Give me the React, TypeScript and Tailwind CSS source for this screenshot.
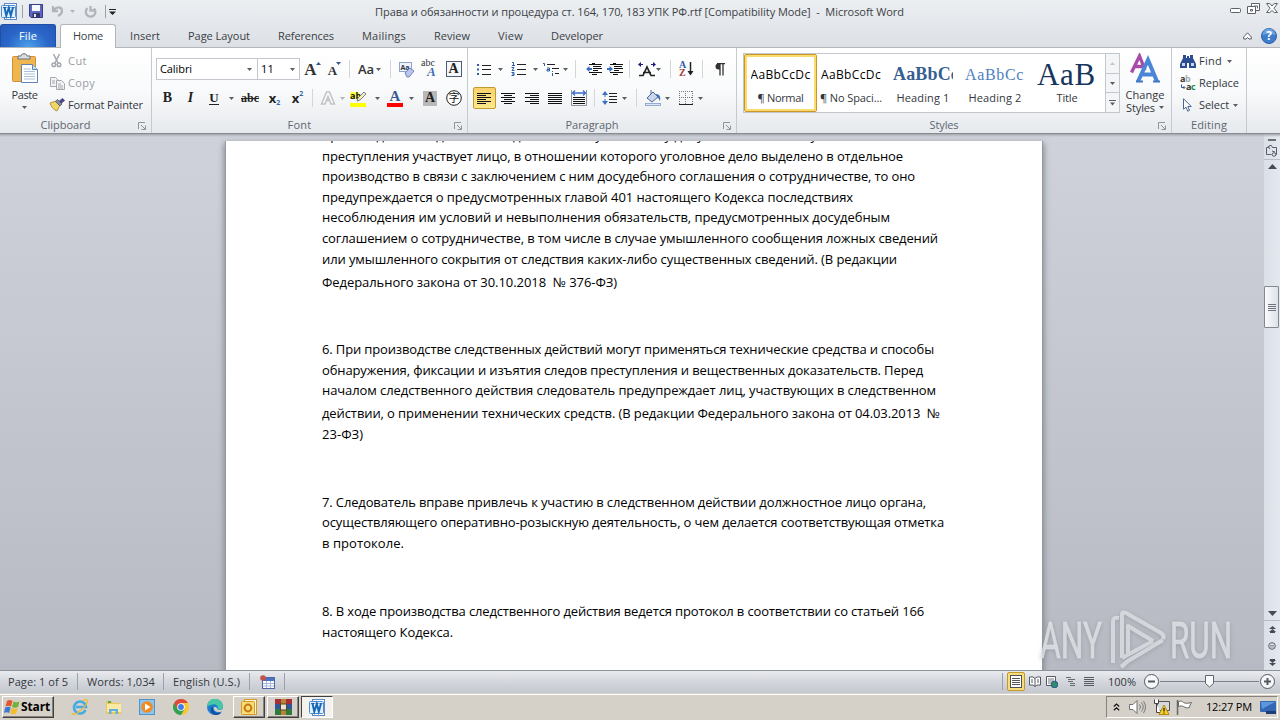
import { useLayoutEffect, useRef, useState } from 'react'
import type { ReactNode } from 'react'

interface TextProps {
  children: string
  w?: number
  className?: string
}

// Single line of text, tracked so that it takes exactly w pixels
function Text({ children, w, className = '' }: TextProps) {
  const ref = useRef<HTMLSpanElement>(null)
  const [spacing, setSpacing] = useState(0)

  useLayoutEffect(() => {
    if (!ref.current || !w) return
    const natural = ref.current.getBoundingClientRect().width
    setSpacing((w - natural) / children.length)
  }, [children, w])

  return (
    <span ref={ref} className={`inline-block shrink-0 whitespace-pre ${className}`} style={{ letterSpacing: spacing }}>
      {children}
    </span>
  )
}

function Cell({ className, children }: { className: string; children?: ReactNode }) {
  return <div className={`flex h-full shrink-0 items-center justify-center ${className}`}>{children}</div>
}

function Arrow({ className = 'text-[#5a5d62]' }: { className?: string }) {
  return (
    <svg width="5" height="3" viewBox="0 0 5 3" className={`shrink-0 ${className}`}>
      <path d="M0 0h5L2.500 3z" fill="currentColor" />
    </svg>
  )
}

function Sep({ className }: { className: string }) {
  return (
    <Cell className={className}>
      <div className="h-[18px] w-px bg-[#d3d6da]" />
    </Cell>
  )
}

function Launcher() {
  return (
    <svg width="8" height="8" viewBox="0 0 8 8" fill="none" stroke="#8f949b">
      <path d="M.5 7V.5H7M3 3l4 4M7.500 3.500v4h-4" />
    </svg>
  )
}

function Group({ className, label, labelW, launcher, children }: {
  className: string
  label: string
  labelW: number
  launcher?: boolean
  children: ReactNode
}) {
  return (
    <section className={`relative flex h-full shrink-0 flex-col border-r border-[#c6cad0] ${className}`}>
      <div className="h-[70px]">{children}</div>
      <div className={`flex h-[14px] items-center justify-center text-[#5e6670] ${launcher ? 'pr-5' : ''}`}>
        <Text w={labelW}>{label}</Text>
      </div>
      {launcher && (
        <div className="absolute right-[5px] bottom-[3px]">
          <Launcher />
        </div>
      )}
    </section>
  )
}

// Text lines of the paragraph icons: [x1, x2] for each line
function Lines({ rows, color = '#111' }: { rows: [number, number][]; color?: string }) {
  return (
    <svg width="15" height="13" viewBox="0 0 15 13" shapeRendering="crispEdges">
      {rows.map(([a, b], i) => (
        <rect key={i} x={a} y={i * 2 + 1} width={b - a} height="1" fill={color} />
      ))}
    </svg>
  )
}

const leftRows: [number, number][] = [[0, 14], [0, 9], [0, 14], [0, 9], [0, 14], [0, 9]]
const centerRows: [number, number][] = [[0, 14], [3, 11], [0, 14], [3, 11], [0, 14], [3, 11]]
const rightRows: [number, number][] = [[0, 14], [5, 14], [0, 14], [5, 14], [0, 14], [5, 14]]
const fullRows: [number, number][] = [[0, 14], [0, 14], [0, 14], [0, 14], [0, 14], [0, 14]]

function WordIcon() {
  return (
    <svg width="17" height="17" viewBox="0 0 17 17">
      <rect x="3.500" y=".5" width="12" height="16" fill="#fff" stroke="#5b8ac7" />
      <rect x=".5" y="2.500" width="14" height="12" rx="1" fill="#e3f0fb" stroke="#4f8ccd" />
      <path d="M2 4.500h3.500M6.500 4.500h3M10.500 4.500h3" stroke="#1769b8" />
      <path d="M3.500 4.500l1.800 8L7.800 5l2 7.500 2.200-8" fill="none" stroke="#1769b8" strokeWidth="2" />
    </svg>
  )
}

function TitleBar() {
  return (
    <header className="flex h-6 items-center bg-gradient-to-b from-[#eceff2] to-[#e4e7eb]">
      <Cell className="w-[18px] pb-[2px]"><WordIcon /></Cell>
      <Cell className="w-[8px] pb-[2px]"><div className="h-[13px] w-px bg-[#9da1a7]" /></Cell>
      <Cell className="w-[20px] pb-[2px]">
        <svg width="14" height="14" viewBox="0 0 14 14">
          <path d="M.5.5h13v13H2L.5 12z" fill="#6067bd" stroke="#363c86" />
          <path d="M3 1h8v6H3z" fill="#f7f8ff" />
          <path d="M3.500 9H11v5H3.500z" fill="#33376f" />
          <path d="M5 10h2v3H5z" fill="#e3e5f8" />
        </svg>
      </Cell>
      <Cell className="w-[23px] pb-[2px]">
        <svg width="13" height="12" viewBox="0 0 13 12" fill="none" stroke="#b1b5bb" strokeWidth="2.300">
          <path d="M2 1v5h5M3 5c3-4 8-3 8 1 0 3-2 4-4 5" />
        </svg>
      </Cell>
      <Cell className="w-[7px] pb-[2px]"><Arrow className="text-[#b1b5bb]" /></Cell>
      <Cell className="w-[26px] pl-[2px] pb-[2px]">
        <svg width="13" height="13" viewBox="0 0 13 13" fill="none" stroke="#b1b5bb" strokeWidth="2.300">
          <path d="M3.500 3.200a4.800 4.800 0 1 0 6.500.3M6.500 1v4.500h5" />
        </svg>
      </Cell>
      <Cell className="w-[6px] pb-[2px]"><div className="h-[13px] w-px bg-[#9da1a7]" /></Cell>
      <Cell className="w-[8px]">
        <svg width="7" height="6" viewBox="0 0 7 6" fill="#222"><path d="M0 0h7v1H0zM0 2.500h7L3.500 6z" /></svg>
      </Cell>
      <div className="ml-[259px] w-[530px] text-[#3b3f45]">
        <Text w={529}>Права и обязанности и процедура ст. 164, 170, 183 УПК РФ.rtf [Compatibility Mode]  -  Microsoft Word</Text>
      </div>
      <div className="ml-auto flex h-full items-start gap-[6px] pt-[3px] pr-[2px]">
        <svg width="12" height="12" viewBox="0 0 12 12"><rect x="1.500" y="5.500" width="10" height="4" rx="1" fill="#fff" stroke="#5d6167" /></svg>
        <svg width="13" height="12" viewBox="0 0 13 12" fill="#fff" stroke="#5d6167">
          <path d="M4.500.5h8v7h-8z" /><path d="M7 3h3.500v2.500" />
          <path d="M.5 3.500h8v7h-8z" /><path d="M3.500 6.500h2v1.500h-2z" />
        </svg>
        <svg width="12" height="11" viewBox="0 0 12 11" fill="#fff" stroke="#5d6167">
          <path d="M.6.5h3.200L6 3 8.200.5h3.200L8 5.300l3.400 4.200H8.200L6 7.500 3.800 9.500H.6L4 5.300z" />
        </svg>
      </div>
    </header>
  )
}

const tabs: [string, number][] = [
  ['Insert', 30],
  ['Page Layout', 62],
  ['References', 56],
  ['Mailings', 44],
  ['Review', 36],
  ['View', 25],
  ['Developer', 52],
]

function TabRow() {
  return (
    <nav className="flex h-6 items-stretch border-b border-[#b2b6bb] bg-gradient-to-b from-[#e4e7eb] to-[#dde1e5] text-[#3b3f45]">
      <div className="flex w-14 items-center justify-center rounded-t-[3px] border border-b-0 border-[#1f4fa6] bg-[radial-gradient(ellipse_at_bottom,#4ba0ea_0%,#2a66c8_55%,#2458b8_100%)] text-white">
        <Text w={18}>File</Text>
      </div>
      <div className="-mb-px ml-[4px] flex w-[56px] items-center justify-center rounded-t-[3px] border border-b-0 border-[#b2b6bb] bg-white pb-[2px]">
        <Text w={30}>Home</Text>
      </div>
      {tabs.map(([name, w]) => (
        <div key={name} className="flex items-center px-[14px]">
          <Text w={w}>{name}</Text>
        </div>
      ))}
      <div className="ml-auto flex items-center gap-[9px] pr-[3px]">
        <svg width="9" height="8" viewBox="0 0 9 8" fill="#fff" stroke="#5d6167">
          <path d="M.7 5L4.500.8 8.300 5v2H6L4.500 5.500 3 7H.7z" />
        </svg>
        <svg width="16" height="16" viewBox="0 0 16 16">
          <circle cx="8" cy="8" r="7.500" fill="#3f7dcb" stroke="#2e5fa9" />
          <path d="M1.500 7a6.500 6.500 0 0 1 13 0c-4-1.500-9-1.500-13 0z" fill="#6ba2e0" />
          <text x="8" y="12.300" textAnchor="middle" fill="#fff" fontSize="12" fontWeight="700" fontFamily="Open Sans, sans-serif">?</text>
        </svg>
      </div>
    </nav>
  )
}

function ClipboardGroup() {
  return (
    <Group className="w-[152px]" label="Clipboard" labelW={50} launcher>
      <div className="flex h-full">
        <div className="flex w-[49px] shrink-0 flex-col items-center pt-[5px]">
          <svg width="28" height="31" viewBox="0 0 28 31">
            <rect x="1.500" y="3.500" width="23" height="25" rx="1" fill="#efb54f" stroke="#d1913a" />
            <path d="M7 6V3h3c0-3 6-3 6 0h3v3z" fill="#d9dde2" stroke="#6d7278" />
            <path d="M10.500 11.500h11l5 5v13h-16z" fill="#fff" stroke="#5f83b5" />
            <path d="M21.500 11.500v5h5" fill="#cddcf0" stroke="#5f83b5" />
            <path d="M13 16h7M13 18.500h11M13 21h11M13 23.500h11M13 26h11" stroke="#aac0de" />
          </svg>
          <Text w={26} className="mt-[4px] leading-[14px]">Paste</Text>
          <div className="mt-[4px] flex"><Arrow /></div>
        </div>
        <div className="flex flex-col pt-[2px] text-[#9a9da2]">
          <div className="flex h-[22px] items-center">
            <Cell className="w-[19px] pr-1">
              <svg width="11" height="14" viewBox="0 0 11 14" fill="none" stroke="#a4a8ad" strokeWidth="1.500">
                <path d="M2.500 0l4.500 9M8.500 0L4 9" /><circle cx="2.800" cy="10.800" r="1.800" /><circle cx="8" cy="10.800" r="1.800" />
              </svg>
            </Cell>
            <Text w={19}>Cut</Text>
          </div>
          <div className="flex h-[22px] items-center">
            <Cell className="w-[19px] pr-[3px]">
              <svg width="15" height="13" viewBox="0 0 15 13" fill="#f2f3f5" stroke="#a4a8ad">
                <path d="M.5.5h5l3 3v6h-8z" /><path d="M6.500 3.500h5l3 3v6h-8z" /><path d="M2 4h3M2 6h3M8 7h3M8 9h5M8 11h5" />
              </svg>
            </Cell>
            <Text w={27}>Copy</Text>
          </div>
          <div className="flex h-[22px] items-center text-[#33373d]">
            <Cell className="w-[19px] pr-[3px]">
              <svg width="16" height="14" viewBox="0 0 16 14">
                <path d="M1 5l6-2 4 4-3 6C5 12 2 9 1 5z" fill="#f0d468" stroke="#b79a3c" />
                <path d="M6.500 3.500l2-2 4.500 4.500-2 2z" fill="#8b8fa0" stroke="#4e5262" strokeWidth=".8" />
                <path d="M10 3l3.500-3L16 2.500 12.500 5.500z" fill="#4a4585" />
              </svg>
            </Cell>
            <Text w={75}>Format Painter</Text>
          </div>
        </div>
      </div>
    </Group>
  )
}

function Serif({ className, children }: { className: string; children: ReactNode }) {
  return <span className={`font-["Liberation_Serif",serif] ${className}`}>{children}</span>
}

function FontGroup() {
  return (
    <Group className="w-[316px]" label="Font" labelW={24} launcher>
      <div className="pt-[10px] pl-1">
        <div className="flex h-[22px] items-center text-black">
          <div className="flex h-full w-[102px] shrink-0 items-center justify-between border border-[#c3c7cd] bg-white pr-[5px] pl-[3px]">
            <Text w={32}>Calibri</Text><Arrow />
          </div>
          <div className="flex h-full w-[42px] shrink-0 items-center justify-between border border-l-0 border-[#c3c7cd] bg-white pr-[4px] pl-[3px]">
            <Text w={13}>11</Text><Arrow />
          </div>
          <Cell className="w-[25px]">
            <Serif className="pt-[2px] text-[17px] font-bold text-[#333]">A</Serif>
            <svg width="5" height="3" viewBox="0 0 5 3" className="-ml-px mb-[11px]"><path d="M0 3h5L2.500 0z" fill="#35568e" /></svg>
          </Cell>
          <Cell className="w-[19px]">
            <Serif className="pt-[4px] text-[13px] font-bold text-[#333]">A</Serif>
            <svg width="5" height="3" viewBox="0 0 5 3" className="-ml-px mb-[11px]"><path d="M0 0h5L2.500 3z" fill="#35568e" /></svg>
          </Cell>
          <Sep className="w-[10px]" />
          <Cell className="w-[20px] pl-1"><Text w={16} className="text-[13px] font-semibold text-[#333]">Aa</Text></Cell>
          <Cell className="w-[9px]"><Arrow /></Cell>
          <Sep className="w-[15px]" />
          <Cell className="w-[17px]">
            <svg width="16" height="17" viewBox="0 0 16 17">
              <rect x=".5" y="1.500" width="12" height="9" fill="#eef3fb" stroke="#8ea5cc" />
              <text x="1.500" y="8.500" fontSize="7" fontWeight="700" fill="#27364f" fontFamily="Open Sans, sans-serif">Aa</text>
              <path d="M6 12l5-5 4 3-5 6H8z" fill="#b9c5ee" stroke="#7484bb" />
            </svg>
          </Cell>
          <Cell className="w-[28px]">
            <svg width="17" height="18" viewBox="0 0 17 18" overflow="visible" fontFamily="Liberation Serif, serif">
              <text x="0" y="6" fontSize="10" fill="#333" textLength="14">abc</text>
              <text x="6" y="16" fontSize="13" fontWeight="700" fontStyle="italic" fill="#3f6db8">A</text>
            </svg>
          </Cell>
          <Cell className="w-[21px]">
            <div className="flex h-4 w-4 items-center justify-center border border-[#4e5c78] bg-[#f5f7fb]"><Serif className="text-[14px] font-bold text-[#222]">A</Serif></div>
          </Cell>
        </div>
        <div className="mt-[7px] flex h-[22px] items-center text-[#222]">
          <Cell className="w-[23px]"><Serif className="text-[14px] font-black">B</Serif></Cell>
          <Cell className="w-[23px]"><Serif className="text-[14px] font-bold italic">I</Serif></Cell>
          <Cell className="w-[24px]"><Serif className="border-b border-[#222] text-[13px] leading-[12px] font-bold">U</Serif></Cell>
          <Cell className="w-[11px]"><Arrow /></Cell>
          <Cell className="w-[26px]"><Serif className="text-[12px] font-bold line-through">abc</Serif></Cell>
          <Cell className="w-[23px]">
            <Text className="text-[13px] font-bold">x</Text><span className="mt-[9px] text-[7px] leading-none font-bold text-[#3563b0]">2</span>
          </Cell>
          <Cell className="w-[23px]">
            <Text className="text-[13px] font-bold">x</Text><span className="mb-[9px] text-[7px] leading-none font-bold text-[#3563b0]">2</span>
          </Cell>
          <Sep className="w-[7px]" />
          <Cell className="w-[23px]">
            <svg width="16" height="16" viewBox="0 0 16 16">
              <path d="M1.500 14L6.500 2h3l5 12h-3.500L8 6.500 5 14zM5.500 10.500h5" fill="#fafafa" stroke="#c0c2c6" strokeWidth="1.500" />
            </svg>
          </Cell>
          <Cell className="w-[6px]"><Arrow className="text-[#b1b5bb]" /></Cell>
          <Cell className="w-[27px]">
            <svg width="17" height="17" viewBox="0 0 17 17">
              <path d="M0 2h9v7H0z" fill="#ffff4a" />
              <text x="0" y="8.500" fontSize="9" fontWeight="700" fill="#111" fontFamily="Open Sans, sans-serif">ab</text>
              <path d="M7 11l1-3 6-6 2 2-6 6z" fill="#f2f0c5" stroke="#6b7069" strokeWidth=".9" />
              <rect y="13" width="16" height="4" fill="#ff0" />
            </svg>
          </Cell>
          <Cell className="w-[10px]"><Arrow /></Cell>
          <Cell className="w-[25px]">
            <svg width="16" height="17" viewBox="0 0 16 17" overflow="visible">
              <text x="8" y="11" textAnchor="middle" fontSize="15" fontWeight="700" fill="#3b5a95" fontFamily="Liberation Serif, serif">A</text>
              <rect y="13" width="16" height="4" fill="#f00" />
            </svg>
          </Cell>
          <Cell className="w-[9px]"><Arrow /></Cell>
          <Cell className="w-[28px]">
            <div className="flex h-[15px] w-[14px] items-center justify-center bg-[#b8b8b8]"><Serif className="text-[14px] font-bold text-[#222]">A</Serif></div>
          </Cell>
          <Cell className="w-[19px]">
            <svg width="16" height="16" viewBox="0 0 16 16">
              <circle cx="8" cy="8" r="7.300" fill="#fff" stroke="#222" />
              <text x="8" y="12" textAnchor="middle" fontSize="11" fill="#111" fontFamily="Noto Sans CJK SC, sans-serif">字</text>
            </svg>
          </Cell>
        </div>
      </div>
    </Group>
  )
}

function IndentIcon({ out }: { out?: boolean }) {
  return (
    <svg width="16" height="13" viewBox="0 0 16 13">
      <path d="M6 .5h3M3 1.500h13M7 3.500h8M7 5.500h9M7 7.500h5M3 9.500h13M6 11.500h5" stroke="#111" shapeRendering="crispEdges" />
      {out
        ? <path d="M0 6l3.500-3v2H6v2H3.500v2z" fill="#3a6fc4" />
        : <path d="M6 6L2.500 3v2H0v2h2.500v2z" fill="#3a6fc4" />}
    </svg>
  )
}

function ParagraphGroup() {
  return (
    <Group className="w-[269px]" label="Paragraph" labelW={53} launcher>
      <div className="pt-[10px] pl-[5px]">
        <div className="flex h-[22px] items-center">
          <Cell className="w-[22px]">
            <svg width="14" height="13" viewBox="0 0 14 13">
              <path d="M5 2h9M5 6.500h9M5 11h9" stroke="#222" shapeRendering="crispEdges" />
              <path d="M0 1h2v2H0zM0 5.500h2v2H0zM0 10h2v2H0z" fill="#2f5ca8" />
            </svg>
          </Cell>
          <Cell className="w-[11px]"><Arrow /></Cell>
          <Cell className="w-[25px]">
            <svg width="15" height="14" viewBox="0 0 15 14">
              <path d="M6 2h9M6 7h9M6 12h9" stroke="#222" shapeRendering="crispEdges" />
              <path d="M1 .5h1.500v3M1 3.500h3M.5 5.500H3l-2 3h2.500M.5 10.500H3v3H.5M1 12h2" fill="none" stroke="#2f5ca8" />
            </svg>
          </Cell>
          <Cell className="w-[9px]"><Arrow /></Cell>
          <Cell className="w-[23px]">
            <svg width="17" height="15" viewBox="0 0 17 15">
              <path d="M4 2h9M9 6.500h7M12 11.500h4" stroke="#222" strokeDasharray="8 1" shapeRendering="crispEdges" />
              <path d="M0 1.500h1.500V4M4 6h2.500v3H4V7.500h2M9.500 9v1M9.500 11v3" fill="none" stroke="#2f5ca8" />
            </svg>
          </Cell>
          <Cell className="w-[5px]"><Arrow /></Cell>
          <Sep className="w-[15px]" />
          <Cell className="w-[22px]"><IndentIcon out /></Cell>
          <Cell className="w-[20px]"><IndentIcon /></Cell>
          <Sep className="w-[9px]" />
          <Cell className="w-[22px] pl-1">
            <svg width="18" height="15" viewBox="0 0 18 15">
              <path d="M1 13.500h4L9 5l4 8.500h4M5 10.500h8" fill="none" stroke="#222" strokeWidth="1.700" />
              <path d="M0 2.500L3 0v5zM18 2.500L15 0v5z" fill="#1d1b80" />
              <path d="M2 2.500h3M13 2.500h3" stroke="#1d1b80" />
            </svg>
          </Cell>
          <Cell className="w-[5px]"><Arrow /></Cell>
          <Sep className="w-[18px]" />
          <Cell className="w-[14px]">
            <svg width="15" height="16" viewBox="0 0 15 16" overflow="visible" className="shrink-0" fontFamily="Liberation Serif, serif" fontWeight="700">
              <text x="0" y="7" fontSize="10" fill="#2f5ca8">A</text>
              <text x="0" y="15" fontSize="10" fill="#a43a35">Z</text>
              <path d="M11.500 1v12" stroke="#222" strokeWidth="1.500" /><path d="M8.500 10h6l-3 4.500z" fill="#222" />
            </svg>
          </Cell>
          <Sep className="w-[19px]" />
          <Cell className="w-[15px]">
            <svg width="10" height="13" viewBox="0 0 10 13">
              <path d="M5 .5H3.500a3 3 0 0 0 0 6H5z" fill="#333" /><path d="M2 .7h8M5 1v11.500M8 1v11.500" stroke="#333" strokeWidth="1.300" />
            </svg>
          </Cell>
        </div>
        <div className="mt-[7px] flex h-[22px] items-center">
          <div className="flex h-full w-[23px] items-center justify-center rounded-[2px] border border-[#c29b2e] bg-gradient-to-b from-[#fbd26d] to-[#fde88b]">
            <Lines rows={leftRows} />
          </div>
          <Cell className="w-[24px]"><Lines rows={centerRows} /></Cell>
          <Cell className="w-[24px]"><Lines rows={rightRows} /></Cell>
          <Cell className="w-[23px]"><Lines rows={fullRows} /></Cell>
          <Cell className="w-[23px]">
            <svg width="16" height="16" viewBox="0 0 16 16">
              <path d="M.5 0v15.500h15V0" fill="none" stroke="#8b93a0" />
              <path d="M1.500 3h13M4 .5L1.500 3 4 5.500M12 .5L14.500 3 12 5.500" fill="none" stroke="#3a6fc4" strokeWidth="1.300" />
              <path d="M2 7.500h12M2 9.500h12M2 11.500h12M2 13.500h12" stroke="#111" shapeRendering="crispEdges" />
            </svg>
          </Cell>
          <Sep className="w-[8px]" />
          <Cell className="w-[24px]">
            <svg width="16" height="16" viewBox="0 0 16 16">
              <path d="M0 5l3-4 3 4zM0 11l3 4 3-4z" fill="#3a6fc4" /><path d="M3 4v3M3 9v3" stroke="#3a6fc4" />
              <path d="M7 3.500h8M7 6.500h8M7 9.500h8M7 12.500h8" stroke="#222" shapeRendering="crispEdges" />
            </svg>
          </Cell>
          <Cell className="w-[4px]"><Arrow /></Cell>
          <Sep className="w-[21px]" />
          <Cell className="w-[13px]">
            <svg width="17" height="16" viewBox="0 0 17 16" className="shrink-0">
              <path d="M2 8l6-6 5 5-6 5z" fill="#c9d8ef" stroke="#4c6694" />
              <path d="M6 0v4" stroke="#4c6694" /><path d="M11 4c3 0 5 2 4 7l-3-5z" fill="#3f72bd" />
              <rect x=".5" y="13.500" width="15" height="2" fill="#dce6f5" stroke="#7f9ccb" strokeWidth=".8" />
            </svg>
          </Cell>
          <Cell className="w-[14px]"><Arrow /></Cell>
          <Cell className="w-[24px]">
            <svg width="14" height="14" viewBox="0 0 14 14" stroke="#777" fill="none" shapeRendering="crispEdges">
              <path d="M0 .5h14M0 6.500h14M.5 0v13M6.500 0v13M13.500 0v13" strokeDasharray="1 1" /><path d="M0 13h14" stroke="#222" />
            </svg>
          </Cell>
          <Cell className="w-[4px]"><Arrow /></Cell>
        </div>
      </div>
    </Group>
  )
}

const styleItems: { name: string; w: number; sample: string; sampleW: number; cls: string }[] = [
  { name: '¶ Normal', w: 46, sample: 'AaBbCcDc', sampleW: 60, cls: 'text-[12px] text-black' },
  { name: '¶ No Spaci...', w: 62, sample: 'AaBbCcDc', sampleW: 60, cls: 'text-[12px] text-black' },
  { name: 'Heading 1', w: 53, sample: 'AaBbCc', sampleW: 66, cls: 'text-[18px] font-bold text-[#365f91] font-["Liberation_Serif",serif]' },
  { name: 'Heading 2', w: 53, sample: 'AaBbCc', sampleW: 59, cls: 'text-[16px] text-[#4f81bd] font-["Liberation_Serif",serif]' },
  { name: 'Title', w: 21, sample: 'AaB', sampleW: 59, cls: 'text-[31px] text-[#17365d] font-["Liberation_Serif",serif]' },
]

function StylesGroup() {
  return (
    <Group className="w-[435px]" label="Styles" labelW={29} launcher>
      <div className="flex h-full pt-[5px] pl-[6px]">
        <div className="flex h-[60px] w-[377px] shrink-0 border border-[#c3c7cd] bg-white">
          {styleItems.map((s, i) => (
            <div
              key={s.name}
              className={`flex h-[58px] shrink-0 flex-col items-center ${
                i === 0 ? '-mr-[2px] w-[73px] rounded-[2px] border border-[#c9962b] shadow-[inset_0_0_0_2px_#fbdc6b]' : 'w-[72px] pt-px'
              }`}
            >
              <div className="flex h-[36px] w-[60px] items-center overflow-hidden pt-[3px]">
                <Text w={s.sampleW} className={`leading-[33px] ${s.cls}`}>{s.sample}</Text>
              </div>
              <div className="flex h-[14px] items-center text-[#33373d]"><Text w={s.w}>{s.name}</Text></div>
            </div>
          ))}
          <div className="ml-auto flex w-[14px] shrink-0 flex-col border-l border-[#c3c7cd] bg-[#f3f5f7]">
            <div className="flex h-[19px] items-center justify-center"><svg width="5" height="3" viewBox="0 0 5 3"><path d="M0 3h5L2.500 0z" fill="#c3c7cd" /></svg></div>
            <div className="flex h-[20px] items-center justify-center border-y border-[#c3c7cd]"><Arrow /></div>
            <div className="flex h-[19px] items-center justify-center">
              <svg width="7" height="6" viewBox="0 0 7 6" fill="#5a5d62"><path d="M0 0h7v1H0zM1 2.500h5L3.500 5.500z" /></svg>
            </div>
          </div>
        </div>
        <div className="flex w-[50px] shrink-0 flex-col items-center text-[#33373d]">
          <svg width="30" height="31" viewBox="0 0 30 31" fill="none">
            <path d="M1.500 19.500L9.500 3l5.500 14M5 13.500h8" stroke="#a84aa8" strokeWidth="3.300" />
            <path d="M8 28.500L18 7l9 21.500M12 21.500h12" stroke="#4a86d6" strokeWidth="4" />
            <path d="M6 28.500h7M23 28.500h7" stroke="#3f74c2" strokeWidth="2" />
          </svg>
          <Text w={39} className="mt-[4px] leading-[13px]">Change</Text>
          <div className="flex items-center gap-1"><Text w={29} className="leading-[13px]">Styles</Text><Arrow /></div>
        </div>
      </div>
    </Group>
  )
}

function EditingGroup() {
  return (
    <Group className="w-[75px]" label="Editing" labelW={36}>
      <div className="flex flex-col pt-[2px] pl-[8px] text-[#33373d]">
        <div className="flex h-[22px] items-center">
          <Cell className="w-[19px] pr-[3px]">
            <svg width="16" height="13" viewBox="0 0 16 13">
              <path d="M3 0h3v3h1V1h2v2h1V0h3v3l3 6v4H9V8H7v5H0V9l3-6z" fill="#2c4c94" />
              <path d="M2 8h3v3H2zM11 8h3v3h-3z" fill="#c5d5f2" />
            </svg>
          </Cell>
          <Text w={23}>Find</Text>
          <div className="ml-[5px] flex"><Arrow /></div>
        </div>
        <div className="flex h-[22px] items-center">
          <Cell className="w-[19px] pr-[3px]">
            <svg width="16" height="15" viewBox="0 0 16 15" overflow="visible" fontFamily="Open Sans, sans-serif" fontWeight="700" fontSize="9">
              <text x="0" y="6" fill="#333">a</text><text x="5" y="6" fill="#aaa">b</text>
              <text x="6" y="14" fill="#333">a</text><text x="11" y="14" fill="#2b8a3a">c</text>
              <path d="M1.500 8.500v3h3M3.500 10l1.500 1.500L3.500 13" fill="none" stroke="#35568e" />
            </svg>
          </Cell>
          <Text w={40}>Replace</Text>
        </div>
        <div className="flex h-[22px] items-center">
          <Cell className="w-[19px] pr-[5px]">
            <svg width="9" height="14" viewBox="0 0 9 14"><path d="M.5.700v10.500l2.500-2 1.800 4 1.700-.8L4.800 8.500h3.500z" fill="#fff" stroke="#4c6694" /></svg>
          </Cell>
          <Text w={30}>Select</Text>
          <div className="ml-[4px] flex"><Arrow /></div>
        </div>
      </div>
    </Group>
  )
}

// [text, width, height]; an empty text is a gap between paragraphs
const lines: [string, number, number][] = [
  ['производстве следственного действия по уголовному делу в отношении соучастников', 562, 20],
  ['преступления участвует лицо, в отношении которого уголовное дело выделено в отдельное', 581, 21],
  ['производство в связи с заключением с ним досудебного соглашения о сотрудничестве, то оно', 593, 20],
  ['предупреждается о предусмотренных главой 401 настоящего Кодекса последствиях', 531, 21],
  ['несоблюдения им условий и невыполнения обязательств, предусмотренных досудебным', 568, 20],
  ['соглашением о сотрудничестве, в том числе в случае умышленного сообщения ложных сведений', 616, 21],
  ['или умышленного сокрытия от следствия каких-либо существенных сведений. (В редакции', 575, 21],
  ['Федерального закона от 30.10.2018  № 376-ФЗ)', 295, 23],
  ['', 0, 46],
  ['6. При производстве следственных действий могут применяться технические средства и способы', 612, 21],
  ['обнаружения, фиксации и изъятия следов преступления и вещественных доказательств. Перед', 601, 21],
  ['началом следственного действия следователь предупреждает лиц, участвующих в следственном', 614, 20],
  ['действии, о применении технических средств. (В редакции Федерального закона от 04.03.2013  №', 618, 23],
  ['23-ФЗ)', 41, 21],
  ['', 0, 47],
  ['7. Следователь вправе привлечь к участию в следственном действии должностное лицо органа,', 604, 21],
  ['осуществляющего оперативно-розыскную деятельность, о чем делается соответствующая отметка', 622, 20],
  ['в протоколе.', 82, 21],
  ['', 0, 48],
  ['8. В ходе производства следственного действия ведется протокол в соответствии со статьей 166', 602, 20],
  ['настоящего Кодекса.', 131, 21],
]

function Page() {
  return (
    <div className="ml-[225px] mt-[7px] h-[529px] w-[818px] shrink-0 overflow-hidden border-x border-[#9599a1] bg-white shadow-[0_3px_6px_1px_#85898f]">
      <div className="-mt-[16px] pl-[96px] text-[13px] text-black">
        {lines.map(([text, w, h], i) => (
          <div key={i} className="flex items-end" style={{ height: h }}>
            {text && <Text w={w} className="h-5 leading-5">{text}</Text>}
          </div>
        ))}
      </div>
    </div>
  )
}

function ScrollBar() {
  return (
    <div className="ml-auto flex w-4 shrink-0 flex-col items-center bg-gradient-to-r from-[#dbdfe7] to-[#e4e8ef]">
      <div className="mt-[5px] h-[2px] w-2 bg-[#6b7077]" />
      <svg width="12" height="12" viewBox="0 0 12 12" fill="none" stroke="#5b6068" className="mt-1">
        <path d="M.5 2.500h2l1-2h2l1 2h4v7h-1M.5 2.500v7h5M2 1l2 3M6 6l3 1" /><circle cx="8" cy="9.500" r="1.800" />
      </svg>
      <div className="mt-[2px] h-px w-full bg-[#b8bcc4]" />
      <svg width="9" height="5" viewBox="0 0 9 5" className="mt-1"><path d="M0 5h9L4.500 0z" fill="#474c54" /></svg>
      <div className="mt-[117px] mr-px flex h-[42px] w-[15px] flex-col items-center justify-center gap-px rounded-[1px] border border-[#83878f] bg-gradient-to-r from-[#fafbfd] to-[#dde1e9]">
        <div className="h-px w-2 bg-[#70757d]" />
        <div className="h-px w-2 bg-[#70757d]" />
        <div className="h-px w-2 bg-[#70757d]" />
        <div className="h-px w-2 bg-[#70757d]" />
      </div>
      <svg width="9" height="5" viewBox="0 0 9 5" className="mt-auto"><path d="M0 0h9L4.500 5z" fill="#474c54" /></svg>
      <div className="mt-[4px] h-px w-full bg-[#b8bcc4]" />
      <svg width="7" height="7" viewBox="0 0 7 7" className="mt-[5px]" fill="#474c54"><path d="M0 3h7L3.500 0zM0 6h7L3.500 3z" /><path d="M1 6h5v1H1z" /></svg>
      <svg width="8" height="8" viewBox="0 0 8 8" className="mt-[9px]" fill="none" stroke="#5b6068"><circle cx="4" cy="4" r="3.300" /><path d="M2 3.500h4M2 5h4" strokeWidth=".6" /></svg>
      <svg width="7" height="7" viewBox="0 0 7 7" className="mt-[9px] mb-[4px]" fill="#474c54"><path d="M0 1h7L3.500 4zM0 4h7L3.500 7z" /><path d="M1 0h5v1H1z" /></svg>
    </div>
  )
}

function Watermark() {
  return (
    <svg width="196" height="64" viewBox="0 0 196 64" className="absolute top-[473px] left-[1038px] drop-shadow-[0_1px_2px_rgba(90,95,105,0.4)]">
      <g fill="#e6e8eb" fillOpacity=".75" stroke="#e6e8eb" strokeOpacity=".5" fontFamily="Roboto, sans-serif" fontSize="50">
        <text x="2" y="51" textLength="62" lengthAdjust="spacingAndGlyphs">ANY</text>
        <text x="132" y="51" textLength="62" lengthAdjust="spacingAndGlyphs">RUN</text>
      </g>
      <g fill="none" stroke="#e6e8eb" strokeOpacity=".7" strokeWidth="4" strokeLinejoin="round">
        <path d="M75 56V15c0-4 2-5 6-4" />
        <path d="M115 34L90 19v29M84 51V8c0-3 2-3 4-2l35 20c3 2 3 4 2 6M84 51l31-17M125 33L90 54c-3 2-4 4-7 6" />
      </g>
    </svg>
  )
}

function StatusSep({ className = '' }: { className?: string }) {
  return <div className={`h-[17px] w-px bg-[#9ca0a8] ${className}`} />
}

function StatusBar() {
  return (
    <footer className="flex h-[23px] shrink-0 items-center border-t border-[#8d9199] bg-gradient-to-b from-[#e9ebef] via-[#d3d6dc] to-[#c4c8cf] pb-px text-[#33373d]">
      <div className="w-[77px] pl-2"><Text w={60}>Page: 1 of 5</Text></div>
      <StatusSep />
      <div className="w-[85px] pl-[9px]"><Text w={68}>Words: 1,034</Text></div>
      <StatusSep />
      <div className="w-[85px] pl-[9px]"><Text w={67}>English (U.S.)</Text></div>
      <StatusSep />
      <Cell className="w-[34px]">
        <svg width="15" height="14" viewBox="0 0 15 14">
          <rect x="2.500" y="2.500" width="12" height="11" fill="#fff" stroke="#4e68a6" /><rect x="3" y="3" width="11" height="3" fill="#4a73c4" />
          <path d="M3 8.500h11M3 11h11M6.500 6v7M10.500 6v7" stroke="#a9b9dc" /><circle cx="3" cy="3" r="2.800" fill="#c5504c" />
        </svg>
      </Cell>
      <StatusSep />
      <StatusSep className="ml-auto" />
      <div className="ml-[4px] flex h-[19px] w-[18px] items-center justify-center rounded-[2px] border border-[#c29b2e] bg-[#fbdc7a]">
        <svg width="12" height="13" viewBox="0 0 12 13"><rect x=".5" y=".5" width="11" height="12" fill="#fff" stroke="#4b5058" /><path d="M2 3.500h8M2 5.500h8M2 7.500h8M2 9.500h8" stroke="#555" /></svg>
      </div>
      <Cell className="w-[19px]">
        <svg width="12" height="11" viewBox="0 0 12 11" fill="#fff" stroke="#555a62"><path d="M.5 1h3.500L6 2.500 8 1h3.500v8H8L6 10.500 4 9H.5zM6 2.500v8M2 4h2M2 6h2M8 4h2M8 6h2" /></svg>
      </Cell>
      <Cell className="w-[16px]">
        <svg width="12" height="12" viewBox="0 0 12 12"><path d="M.5.5h9v9h-9z" fill="#fff" stroke="#555a62" /><path d="M2 3h6M2 5h6M2 7h3" stroke="#777" /><circle cx="8.500" cy="8.500" r="3.300" fill="#2f8a70" stroke="#245a8c" /></svg>
      </Cell>
      <Cell className="w-[20px]">
        <svg width="9" height="9" viewBox="0 0 9 9" stroke="#666b73"><path d="M0 .5h5M2 2.500h7M2 4.500h5M4 6.500h5M4 8.500h5" /></svg>
      </Cell>
      <Cell className="w-[18px]">
        <svg width="10" height="9" viewBox="0 0 10 9" stroke="#555a62"><path d="M0 .5h10M0 2.500h10M0 4.500h10M0 6.500h10M0 8.500h10" /></svg>
      </Cell>
      <div className="ml-[10px] w-[35px]"><Text w={28}>100%</Text></div>
      <div className="flex items-center">
        <svg width="17" height="17" viewBox="0 0 17 17" fill="#f6f7f9" stroke="#555a62"><circle cx="8.500" cy="8.500" r="7" /><path d="M5 8.500h7" strokeWidth="2" /></svg>
        <svg width="99" height="17" viewBox="0 0 99 17">
          <path d="M0 8.500h99" stroke="#7d828a" /><path d="M45.500 2.500h8v8l-4 3.500-4-3.500z" fill="#fafbfc" stroke="#5f646c" />
        </svg>
        <svg width="17" height="17" viewBox="0 0 17 17" fill="#f6f7f9" stroke="#555a62"><circle cx="8.500" cy="8.500" r="7" /><path d="M5 8.500h7M8.500 5v7" strokeWidth="2" /></svg>
      </div>
      <div className="w-[4px]" />
    </footer>
  )
}

const raised = 'border border-t-white border-l-white border-r-[#404040] border-b-[#404040] shadow-[inset_-1px_-1px_0_#87837c]'

function TaskBar() {
  return (
    <footer className="flex h-[27px] shrink-0 items-center bg-[#d6d1c8] pt-[1px] pl-[2px] shadow-[inset_0_1px_0_#d6d1c8,inset_0_2px_0_#fff]">
      <div className={`flex h-[22px] w-[52px] items-center pl-[1px] ${raised}`}>
        <svg width="17" height="16" viewBox="0 0 17 16">
          <path d="M3 2c2-1.500 4-1 5.500 0L7 7.500c-2-1-4-1-5.500 0z" fill="#e4572c" />
          <path d="M9.500 2.500c2 1 4 1 6 0L14 8c-2 1-4 1-6 0z" fill="#74b03c" />
          <path d="M1.200 8.500c2-1 4-1 5.500 0L5.200 14c-2-1-3.500-1-5.200 0z" fill="#3e7bd0" />
          <path d="M7.700 9c2 1 4 1 6 0l-1.500 5.500c-2 1-4 1-6 0z" fill="#f3bd2c" />
        </svg>
        <Text w={29} className="text-[12px] font-bold text-black">Start</Text>
      </div>
      <Cell className="ml-[9px] w-[34px]">
        <svg width="18" height="18" viewBox="0 0 18 18" fill="none">
          <path d="M14.500 12a6 6 0 1 1 .5-3H5" stroke="#46aae6" strokeWidth="2.600" /><path d="M1 15c0 2 3 2 8-2 6-5 9-10 7-11-1-.8-3 0-5 1" stroke="#e8bc3a" strokeWidth="1.300" />
        </svg>
      </Cell>
      <Cell className="w-[33px]">
        <svg width="17" height="15" viewBox="0 0 17 15">
          <path d="M1 1h6l1 2h8v11H1z" fill="#e9c95c" /><path d="M2 4h14v8H2z" fill="#f9e9a5" /><path d="M4 14V9h9v5h-2.500v-3h-4v3z" fill="#62aee0" /><path d="M3 1h3v2H3z" fill="#55a860" />
        </svg>
      </Cell>
      <Cell className="w-[34px]">
        <svg width="16" height="16" viewBox="0 0 16 16"><rect x=".5" y=".5" width="15" height="15" fill="#8ec3ec" stroke="#4f95cc" /><circle cx="8" cy="8" r="5.800" fill="#f28a22" /><path d="M6 4.500v7l5.500-3.500z" fill="#fff" /></svg>
      </Cell>
      <Cell className="w-[34px]">
        <svg width="16" height="16" viewBox="0 0 16 16">
          <path d="M8 8V0a8 8 0 0 1 6.930 4 8 8 0 0 1-6.930 12z" fill="#f6c733" />
          <path d="M1.070 4A8 8 0 0 0 8 16l3.500-6L8 8z" fill="#33a152" /><path d="M1.070 4A8 8 0 0 1 14.930 4H8z" fill="#dd4b3c" />
          <path d="M1.070 4H8v4l-3.500 2z" fill="#dd4b3c" />
          <circle cx="8" cy="8" r="3.800" fill="#fff" /><circle cx="8" cy="8" r="2.900" fill="#3c7be8" />
        </svg>
      </Cell>
      <Cell className="w-[34px]">
        <svg width="16" height="16" viewBox="0 0 16 16">
          <circle cx="8" cy="8" r="8" fill="#1b7fd0" /><path d="M0 8a8 8 0 0 1 16-.5c0 3-3 3.800-5.500 3C12 7 9 4.500 5.500 5.500 3 6 1 7 0 8z" fill="#48c7a4" />
          <path d="M6 9c0 4 4 6 8.500 4.500C12 17 6 16.500 4 13c-1-3 0-5 2-5z" fill="#15509e" /><path d="M6.500 9c1-2 4-1 4 1.500 1.500 1 4.500.5 5.500-1v2c-4 3-9 1.500-9.500-2.500z" fill="#d6d1c8" />
        </svg>
      </Cell>
      <div className="ml-[1px] flex gap-[2px]">
        <div className={`flex h-[22px] w-8 items-center justify-center ${raised}`}>
          <svg width="17" height="17" viewBox="0 0 17 17"><rect x="3.500" y=".5" width="12" height="15" fill="#fff7dc" stroke="#d59a25" /><rect x=".5" y="2.500" width="13" height="13" rx="1" fill="#fbdc73" stroke="#d59a25" /><circle cx="7" cy="9" r="3.400" fill="none" stroke="#c47a14" strokeWidth="2" /></svg>
        </div>
        <div className={`flex h-[22px] w-8 items-center justify-center ${raised}`}>
          <svg width="17" height="16" viewBox="0 0 17 16"><rect width="17" height="5" fill="#a62e36" /><rect y="5" width="17" height="5" fill="#33539c" /><rect y="10" width="17" height="6" fill="#2f7a3d" /><rect x="6" width="5" height="16" fill="#b98436" /><rect x="5.500" y="5" width="6" height="6" fill="#e8e3d2" stroke="#53441e" /></svg>
        </div>
        <div className="flex h-[22px] w-8 items-center justify-center border border-t-[#404040] border-r-white border-b-white border-l-[#404040] bg-[#f3f2ef]">
          <WordIcon />
        </div>
      </div>
      <div className="mr-[2px] ml-auto flex h-[22px] w-[172px] items-center border border-t-[#87837c] border-r-white border-b-white border-l-[#87837c] text-black">
        <Cell className="w-[18px]"><svg width="7" height="8" viewBox="0 0 7 8" fill="none" stroke="#111" strokeWidth="1.200"><path d="M.8 3.500l2.700-2.500 2.700 2.500M.8 7.300l2.700-2.500 2.700 2.500" /></svg></Cell>
        <Cell className="w-[24px]">
          <svg width="17" height="14" viewBox="0 0 17 14" fill="#fff" stroke="#6b6f75"><path d="M.5 4.500H4l4-4v13l-4-4H.5z" /><path d="M10.500 4.500q2 2.500 0 5M12.500 2.500q3.500 4.500 0 9M14.500 1q4 6 0 12" fill="none" strokeWidth=".9" /></svg>
        </Cell>
        <Cell className="w-[24px]">
          <svg width="17" height="16" viewBox="0 0 17 16"><path d="M4.500 2.500h12v9h-12z" fill="#d5d8dc" stroke="#555" /><path d="M1.500.5v4h4v-4M3.500 4.500v9h4" fill="#fff" stroke="#444" /><path d="M11 6l5 9.500H6z" fill="#f8cf2c" stroke="#b38a10" /><path d="M11 9v3.500M11 13.500v1" stroke="#222" strokeWidth="1.300" /></svg>
        </Cell>
        <Cell className="w-[22px]">
          <svg width="16" height="15" viewBox="0 0 16 15" fill="#fff" stroke="#666"><path d="M1.500 0v15" strokeWidth="1.500" /><path d="M2.500 1.500c3-1 4 0 5 1 2 1 4 1 8 0-1 2-2 3-2 5-3 1-4 0-6-1-2-.8-3-.6-5 0z" /></svg>
        </Cell>
        <div className="ml-[11px] w-[54px] shrink-0"><Text w={46}>12:27 PM</Text></div>
        <svg width="16" height="13" viewBox="0 0 16 13" className="shrink-0"><rect width="16" height="11" rx="1" fill="#3268b4" /><path d="M1 1h14L2 8z" fill="#5d97dc" /><rect x="6" y="10" width="10" height="3" fill="#1d3d74" /></svg>
      </div>
    </footer>
  )
}

export default function App() {
  return (
    <div className='flex h-[720px] w-[1280px] flex-col overflow-hidden bg-white font-["Open_Sans","Noto_Sans",sans-serif] text-[11px] leading-[14px]'>
      <TitleBar />
      <TabRow />
      <div className="flex h-[86px] shrink-0 border-b border-[#878b92] bg-gradient-to-b from-white via-[#f9fafb] to-[#e6e9ed] text-[#33373d]">
        <ClipboardGroup />
        <FontGroup />
        <ParagraphGroup />
        <StylesGroup />
        <EditingGroup />
      </div>
      <main className="relative flex h-[536px] shrink-0 overflow-hidden bg-gradient-to-b from-[#cfd2da] to-[#b7bac2]">
        <Page />
        <ScrollBar />
        <div className="absolute inset-x-0 top-0 h-[3px] bg-gradient-to-b from-[#a4a8ae] to-transparent" />
        <Watermark />
      </main>
      <StatusBar />
      <TaskBar />
    </div>
  )
}
